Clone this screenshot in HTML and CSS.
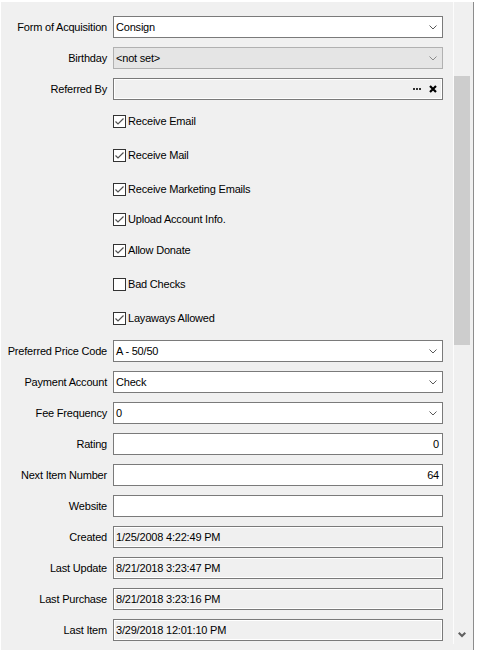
FILE: index.html
```html
<!DOCTYPE html>
<html>
<head>
    <title>Customer Details</title>
    <link rel="stylesheet" href="styles.css">
</head>
<body>
    <div class="panel">
        <div class="form">
            <div class="label">Form of Acquisition</div>
            <div class="field combo">
                <span>Consign</span>
                <svg class="chevron" width="8" height="5" viewBox="0 0 8 5"><path d="M0.5 0.5 L4 4 L7.5 0.5" fill="none" stroke="#5a5a5a" stroke-width="1"/></svg>
            </div>

            <div class="label">Birthday</div>
            <div class="field combo disabled">
                <span>&lt;not set&gt;</span>
                <svg class="chevron" width="8" height="5" viewBox="0 0 8 5"><path d="M0.5 0.5 L4 4 L7.5 0.5" fill="none" stroke="#8a8a8a" stroke-width="1"/></svg>
            </div>

            <div class="label">Referred By</div>
            <div class="field readonly picker">
                <svg class="dots" width="8" height="2" viewBox="0 0 8 2"><rect x="0" y="0" width="2" height="2" fill="#333"/><rect x="3" y="0" width="2" height="2" fill="#333"/><rect x="6" y="0" width="2" height="2" fill="#333"/></svg>
                <svg class="clear" width="8" height="8" viewBox="0 0 8 8"><path d="M1 1 L7 7 M7 1 L1 7" stroke="#000" stroke-width="2.2"/></svg>
            </div>

            <div class="checks">
                <div class="check"><span class="box checked"></span>Receive Email</div>
                <div class="check"><span class="box checked"></span>Receive Mail</div>
                <div class="check"><span class="box checked"></span>Receive Marketing Emails</div>
                <div class="check gap-16"><span class="box checked"></span>Upload Account Info.</div>
                <div class="check gap-17"><span class="box checked"></span>Allow Donate</div>
                <div class="check"><span class="box"></span>Bad Checks</div>
                <div class="check"><span class="box checked"></span>Layaways Allowed</div>
            </div>

            <div class="label">Preferred Price Code</div>
            <div class="field combo">
                <span>A - 50/50</span>
                <svg class="chevron" width="8" height="5" viewBox="0 0 8 5"><path d="M0.5 0.5 L4 4 L7.5 0.5" fill="none" stroke="#5a5a5a" stroke-width="1"/></svg>
            </div>

            <div class="label">Payment Account</div>
            <div class="field combo">
                <span>Check</span>
                <svg class="chevron" width="8" height="5" viewBox="0 0 8 5"><path d="M0.5 0.5 L4 4 L7.5 0.5" fill="none" stroke="#5a5a5a" stroke-width="1"/></svg>
            </div>

            <div class="label">Fee Frequency</div>
            <div class="field combo">
                <span>0</span>
                <svg class="chevron" width="8" height="5" viewBox="0 0 8 5"><path d="M0.5 0.5 L4 4 L7.5 0.5" fill="none" stroke="#5a5a5a" stroke-width="1"/></svg>
            </div>

            <div class="label">Rating</div>
            <div class="field number">0</div>

            <div class="label">Next Item Number</div>
            <div class="field number">64</div>

            <div class="label">Website</div>
            <div class="field"></div>

            <div class="label">Created</div>
            <div class="field readonly">1/25/2008 4:22:49 PM</div>

            <div class="label">Last Update</div>
            <div class="field readonly">8/21/2018 3:23:47 PM</div>

            <div class="label">Last Purchase</div>
            <div class="field readonly">8/21/2018 3:23:16 PM</div>

            <div class="label">Last Item</div>
            <div class="field readonly">3/29/2018 12:01:10 PM</div>
        </div>

        <div class="scrollbar">
            <div class="thumb"></div>
            <svg class="arrow-down" width="8" height="6" viewBox="0 0 8 6"><path d="M0 1.5 L1.5 0 L4 2.5 L6.5 0 L8 1.5 L4 5.5 Z" fill="#606060"/></svg>
        </div>
    </div>
</body>
</html>
```

FILE: styles.css
```css
body {
    margin: 0;
    background: #fff;
    font-family: 'Liberation Sans', Arial, sans-serif;
    font-size: 11px;
    letter-spacing: -0.2px;
    color: #000;
}

.panel {
    display: flex;
    margin: 2px 0 0 1px;
    width: 473px;
    height: 648px;
    box-sizing: border-box;
    background: #f0f0f0;
    border-right: 1px solid #8c8c8c;
}

.form {
    width: 452px;
    display: grid;
    grid-template-columns: 106px 330px;
    column-gap: 6px;
    row-gap: 9px;
    align-content: start;
    padding-top: 14px;
}

.label {
    align-self: center;
    text-align: right;
    white-space: nowrap;
}

.field {
    height: 22px;
    box-sizing: border-box;
    border: 1px solid #7a7a7a;
    background: #fff;
    display: flex;
    align-items: center;
    padding: 0 2px;
    white-space: nowrap;
}

.chevron {
    margin-left: auto;
    margin-right: 3px;
}

.field.disabled {
    background: #e5e5e5;
    border-color: #b1b1b1;
}

.field.readonly {
    background: #f0f0f0;
    box-shadow: inset 0 0 0 1px #fff;
}

.field.number {
    justify-content: flex-end;
    padding-right: 3px;
}

.picker .dots {
    margin-left: auto;
}

.picker .clear {
    margin: 0 3px 0 8px;
}

.checks {
    grid-column: 2;
    display: flex;
    flex-direction: column;
    margin: 5px 0 6px;
}

.check {
    display: flex;
    align-items: center;
    gap: 2px;
    height: 14px;
    margin-top: 20px;
}

.check:first-child {
    margin-top: 0;
}

.check.gap-16 {
    margin-top: 16px;
}

.check.gap-17 {
    margin-top: 17px;
}

.box {
    width: 13px;
    height: 13px;
    box-sizing: border-box;
    border: 1px solid #333;
    background: #fff;
}

.box.checked {
    background: #fff url("data:image/svg+xml,%3Csvg xmlns='http://www.w3.org/2000/svg' width='11' height='11' viewBox='0 0 11 11'%3E%3Cpath d='M1.5 5.5 L4 8 L9.5 2.5' fill='none' stroke='%23505050' stroke-width='1.2'/%3E%3C/svg%3E") no-repeat center;
}

.scrollbar {
    width: 20px;
    height: 642px;
    box-sizing: border-box;
    border-left: 1px solid #fcfcfc;
    display: flex;
    flex-direction: column;
}

.thumb {
    margin-top: 74px;
    width: 16px;
    height: 269px;
    background: #cdcdcd;
}

.arrow-down {
    margin: auto 0 6px 4px;
}
```
